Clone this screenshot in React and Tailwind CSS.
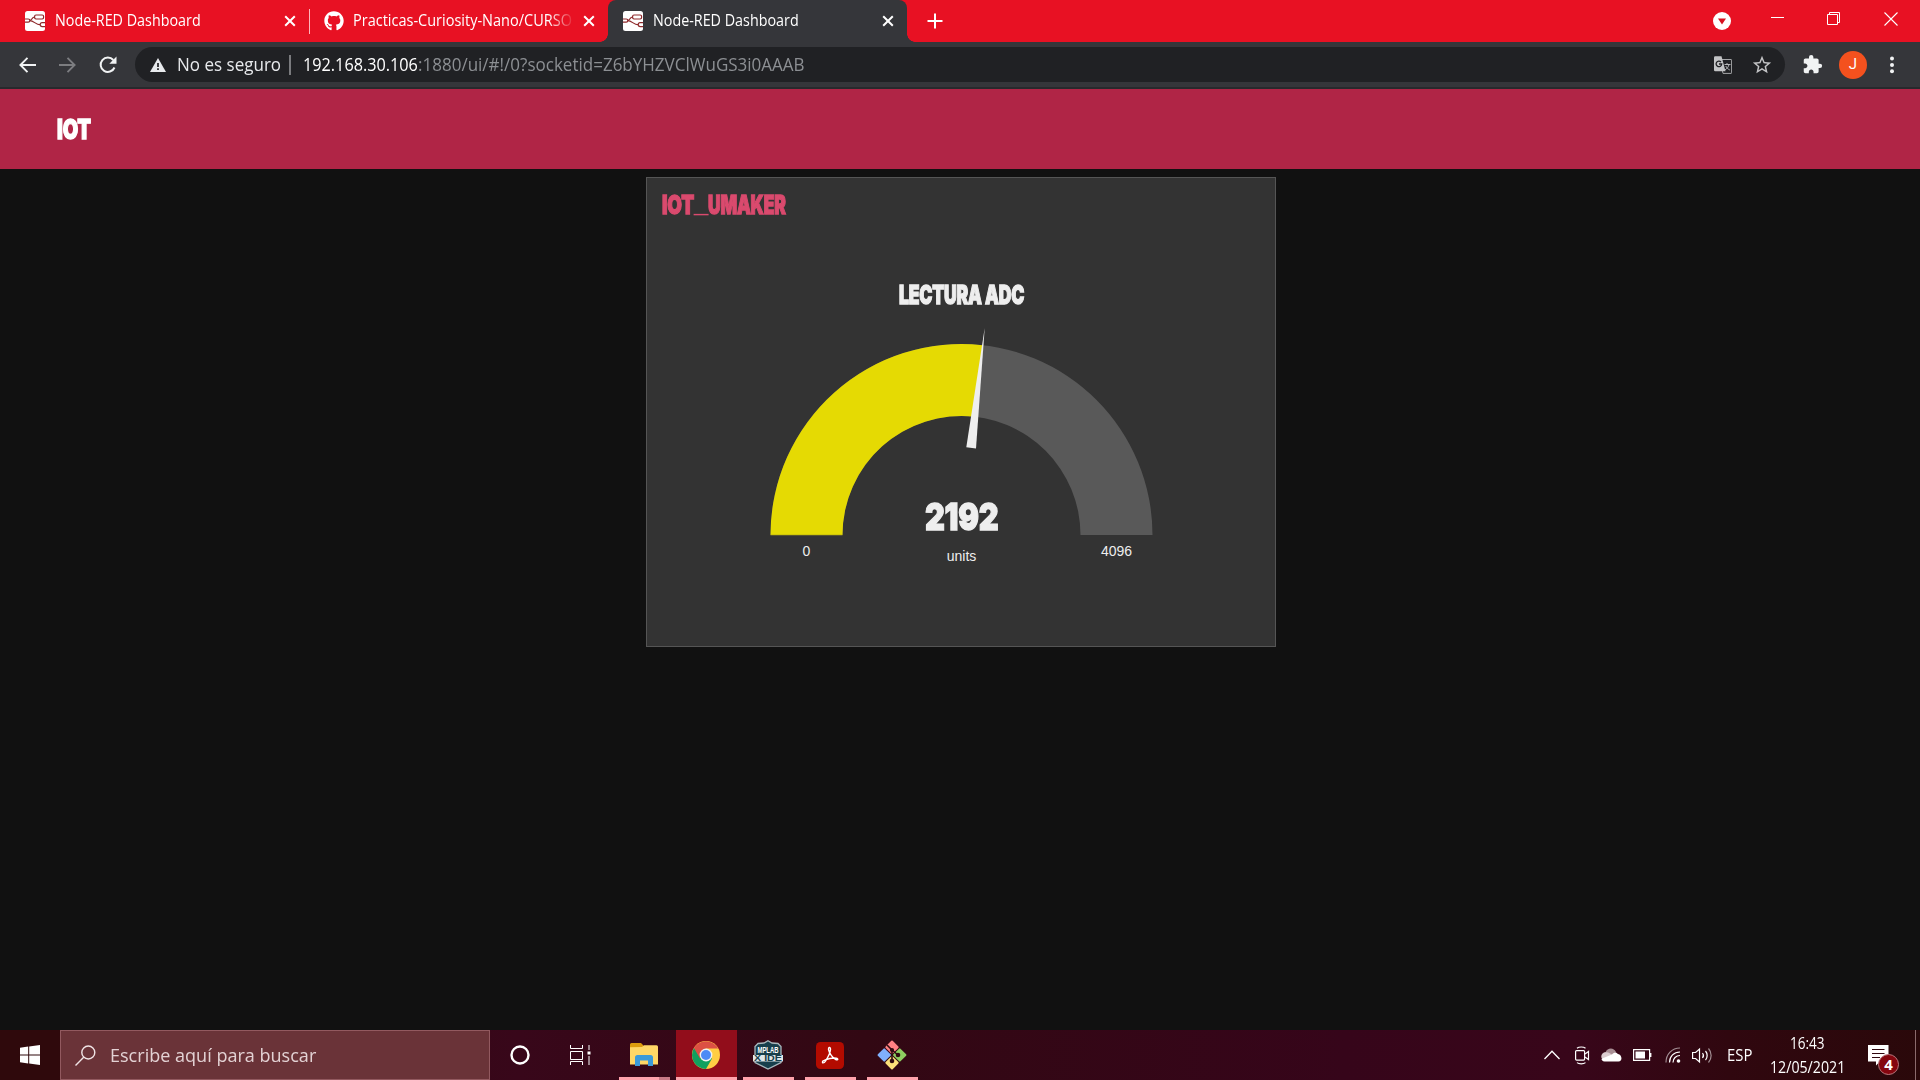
import React, { useLayoutEffect, useRef, useState } from 'react';
import { FaGithub } from 'react-icons/fa';
import { MdStarBorder, MdExtension } from 'react-icons/md';

// Single line of text stretched horizontally to an exact width.
function Fit({ w, className = '', children }) {
  const ref = useRef(null);
  const [s, setS] = useState(1);
  useLayoutEffect(() => {
    setS(w / ref.current.offsetWidth);
  }, [w]);
  return (
    <span className="block shrink-0 whitespace-nowrap" style={{ width: w }}>
      <span ref={ref} className={'inline-block origin-left ' + className} style={{ transform: `scaleX(${s})` }}>{children}</span>
    </span>
  );
}

const ui = "font-['Open_Sans','Noto_Sans',sans-serif]";
const impact = "font-['Inter',sans-serif] font-black tracking-[-0.01em] [-webkit-text-stroke:1.3px_currentColor]";

function NodeRedIcon() {
  return (
    <svg width="20" height="20" viewBox="0 0 20 20" className="shrink-0">
      <rect width="20" height="20" rx="2.5" fill="#fff" />
      <g fill="none" stroke="#8f2a2c" strokeWidth="1.2">
        <rect x="9.6" y="4" width="9" height="4" rx="1.4" />
        <path d="M0 8h3.200a1.500 1.500 0 0 1 0 3.200H0M4.500 9.600C7.500 9.600 6.500 6 9.600 6M4.500 9.600c5 0 5.500 4.200 11 4.200M20 11.600h-2.800a2 2 0 0 0 0 4H20" />
      </g>
    </svg>
  );
}

function TabClose() {
  return (
    <svg width="12" height="12" viewBox="0 0 12 12" className="shrink-0" stroke="#fff" strokeWidth="2"><path d="M1.200 1.200l9.600 9.600M10.800 1.200l-9.600 9.600" /></svg>
  );
}

function TabStrip() {
  return (
    <div className="flex h-[42px] bg-[#e81123] text-white">
      <div className="flex h-full w-[310px] items-center pl-[25px]">
        <NodeRedIcon />
        <div className="ml-[10px]"><Fit w={146} className={ui + ' pb-[2px] text-[15.5px] leading-[40px]'}>Node-RED Dashboard</Fit></div>
        <div className="ml-[83px]"><TabClose /></div>
        <div className="ml-auto h-[25px] w-px bg-[#ffb4ba]" />
      </div>
      <div className="flex h-full w-[298px] items-center pl-[14px]">
        <FaGithub size={20} className="shrink-0" />
        <div className="ml-[9px] w-[219px] overflow-hidden [mask-image:linear-gradient(to_right,black_195px,transparent_222px)]">
          <Fit w={219} className={ui + ' pb-[2px] text-[15.5px] leading-[40px]'}>Practicas-Curiosity-Nano/CURSO</Fit>
        </div>
        <div className="ml-[11px]"><TabClose /></div>
      </div>
      <div className="relative flex h-full w-[299px] items-center rounded-t-[8px] bg-[#35363a] pl-[15px]">
        <span className="absolute bottom-0 -left-[8px] size-[8px] bg-[radial-gradient(circle_at_0_0,transparent_7.5px,#35363a_8px)]" />
        <span className="absolute bottom-0 -right-[8px] size-[8px] bg-[radial-gradient(circle_at_100%_0,transparent_7.5px,#35363a_8px)]" />
        <NodeRedIcon />
        <div className="ml-[10px]"><Fit w={146} className={ui + ' pb-[2px] text-[15.5px] leading-[40px]'}>Node-RED Dashboard</Fit></div>
        <div className="ml-[83px]"><TabClose /></div>
      </div>
      <div className="ml-[20px] flex items-center">
        <svg width="16" height="16" viewBox="0 0 16 16" stroke="#fff" strokeWidth="2"><path d="M8 .5v15M.5 8h15" /></svg>
      </div>
      <div className="ml-auto flex items-start">
        <svg width="18" height="18" viewBox="0 0 18 18" className="mt-[12px]"><circle cx="9" cy="9" r="9" fill="#fff" /><path d="M5 6.500h8L9 12.500z" fill="#d8101f" /></svg>
        <svg width="13" height="1" className="mt-[17px] ml-[40px]"><rect width="13" height="1" fill="#fff" /></svg>
        <svg width="13" height="13" viewBox="0 0 13 13" className="mt-[12px] ml-[43px]" fill="none" stroke="#fff"><path d="M.5 2.500h10v10H.5zM2.500 2.500v-2h10v10h-2" /></svg>
        <svg width="14" height="14" viewBox="0 0 14 14" className="mt-[12px] mr-[22px] ml-[44px]" stroke="#fff" strokeWidth="1.100"><path d="M.5.5l13 13M13.500.5l-13 13" /></svg>
      </div>
    </div>
  );
}

function Toolbar() {
  return (
    <div className="flex h-[47px] items-start border-b-2 border-[#28292c] bg-[#35363a] pt-[5px]">
      <div className="flex h-[35px] items-center text-[#f1f3f4]">
        <svg width="17" height="16" viewBox="0 0 17 16" className="ml-[19px]" fill="none" stroke="#f1f3f4" strokeWidth="1.900"><path d="M17 8H1.500M8.500.800L1.400 8l7.100 7.200" /></svg>
        <svg width="17" height="16" viewBox="0 0 17 16" className="ml-[23px]" fill="none" stroke="#7c7d80" strokeWidth="1.900"><path d="M0 8h15.500M8.500.800L15.600 8l-7.100 7.200" /></svg>
        <svg width="18" height="18" viewBox="0 0 18 18" className="ml-[23px]" fill="none" stroke="#f1f3f4" strokeWidth="2"><path d="M15.500 11.500A7.200 7.200 0 1 1 14.300 4" /><path d="M17.500.600v7.200h-7.200z" fill="#f1f3f4" stroke="none" /></svg>
      </div>
      <div className="ml-[18px] flex h-[35px] w-[1650px] items-center rounded-full bg-[#202124] pl-[15px]">
        <svg width="16" height="14" viewBox="0 0 16 14" className="shrink-0"><path d="M8 0l8 14H0z" fill="#e8eaed" /><path d="M8 5v4M8 10.300v1.700" stroke="#202124" strokeWidth="1.700" /></svg>
        <div className="ml-[11px]"><Fit w={104} className={ui + ' text-[18px] leading-[35px] text-[#e8eaed]'}>No es seguro</Fit></div>
        <div className="ml-[8px] h-[20px] w-[2px] bg-[#7a7b7e]" />
        <div className="ml-[12px]"><Fit w={115} className={ui + ' text-[17.5px] leading-[35px] text-[#fff]'}>192.168.30.106</Fit></div>
        <Fit w={387} className={ui + ' text-[17.5px] leading-[35px] text-[#8c8f93]'}>:1880/ui/#!/0?socketid=Z6bYHZVClWuGS3i0AAAB</Fit>
        <svg width="18" height="18" viewBox="0 0 18 18" className="ml-auto">
          <path d="M6 3.500h11a.6.6 0 0 1 .6.600v12.700a.6.6 0 0 1-.6.600H9z" fill="none" stroke="#a5a6a8" strokeWidth="1" />
          <path d="M1.200.200h6.300l4 15H1.200a1.200 1.200 0 0 1-1.200-1.200V1.400A1.200 1.200 0 0 1 1.200.200z" fill="#c3c4c6" />
          <path d="M7 6A2.800 2.800 0 1 0 7.700 8H5" fill="none" stroke="#202124" strokeWidth="1.300" />
          <path d="M10.500 8.500h6M13 7v1.500M15 8.500c-.5 2.500-2 4-4 5.500M11.800 10c.8 1.800 2 3 4 4" fill="none" stroke="#b5b6b8" />
        </svg>
        <MdStarBorder size={22} className="mr-[12px] ml-[19px] text-[#c3c4c6]" />
      </div>
      <div className="flex h-[35px] items-center">
        <MdExtension size={21} className="ml-[17px] text-[#f1f3f4]" />
        <div className="ml-[16px] flex size-[28px] items-center justify-center rounded-full bg-[#f4511e] font-['Roboto',sans-serif] text-[15px] text-white">J</div>
        <svg width="4" height="18" viewBox="0 0 4 18" className="ml-[23px]" fill="#f1f3f4"><circle cx="2" cy="2.500" r="2" /><circle cx="2" cy="9" r="2" /><circle cx="2" cy="15.300" r="2" /></svg>
      </div>
    </div>
  );
}

function Gauge() {
  return (
    <svg width="385" height="210" viewBox="769 327 385 210" className="block">
      <path d="M770.500 535A191 191 0 0 1 1152.500 535H1080.500A119 119 0 0 0 842.500 535Z" fill="#595959" />
      <path d="M770.500 535A191 191 0 0 1 982.600 345.200L974.600 416.700A119 119 0 0 0 842.500 535Z" fill="#e5da03" />
      <path d="M770.500 535.300h72" stroke="#6e6a28" strokeWidth="0.8" />
      <path d="M984.700 328L966.300 447.300 976 448.500Z" fill="#eee" />
    </svg>
  );
}

function Dashboard() {
  return (
    <main className="flex flex-1 flex-col bg-[#111]">
      <header className="h-[80px] bg-[#b02546] pt-[24px] pl-[57px] text-white">
        <Fit w={34} className={impact + ' text-[26.5px] leading-[33px]'}>IOT</Fit>
      </header>
      <section className="mt-[8px] ml-[646px] flex h-[470px] w-[630px] flex-col border border-[#555] bg-[#333]">
        <div className="mt-[10px] ml-[15px] flex text-[#da4a6e]">
          <Fit w={32} className={impact + ' text-[25.5px] leading-[34px]'}>IOT</Fit>
          <Fit w={14} className="font-['Liberation_Sans',sans-serif] text-[22px] leading-[31px]">_</Fit>
          <Fit w={78} className={impact + ' text-[25.5px] leading-[34px]'}>UMAKER</Fit>
        </div>
        <div className="mt-[57px] ml-[252px] text-[#eee]"><Fit w={125} className={impact + ' text-[25.5px] leading-[32px]'}>LECTURA ADC</Fit></div>
        <div className="mt-[16px] ml-[122px] w-[385px]">
          <Gauge />
          <div className="relative -mt-[40px] flex justify-center text-[#eee]"><Fit w={73} className={impact + ' text-[37.5px] leading-[40px]'}>2192</Fit></div>
          <div className="grid grid-cols-[75px_1fr_75px] pt-px text-center font-['Liberation_Sans',sans-serif] text-[14px] leading-[16px] text-[#eee]">
            <span className="pt-[5px]">0</span><span className="pt-[10px]">units</span><span className="pt-[5px]">4096</span>
          </div>
        </div>
      </section>
    </main>
  );
}

function FolderIcon() {
  return (
    <svg width="28" height="24" viewBox="0 0 28 24"><path d="M0 2.500V1.500A1.500 1.500 0 0 1 1.500 0H11l2.500 2.500V6H0z" fill="#dd9c0d" /><path d="M0 4.200l12-.2 2-1.700h12.500A1.500 1.500 0 0 1 28 3.800V21.500H0z" fill="#ffd766" /><path d="M5 23V14.500A2.500 2.500 0 0 1 7.500 12h13a2.500 2.500 0 0 1 2.500 2.500V23h-5v-5.500H10V23z" fill="#3b9ad9" /></svg>
  );
}

function ChromeIcon() {
  return (
    <svg width="28" height="28" viewBox="0 0 28 28"><circle cx="14" cy="14" r="14" fill="#ffce44" /><path d="M14 14L1.900 7A14 14 0 0 0 14 28l6-10.500z" fill="#11a05e" /><path d="M1.900 7A14 14 0 0 1 26.100 7.500H14L8 17.500z" fill="#dc5044" /><circle cx="14" cy="14" r="6.400" fill="#f1f1f1" /><circle cx="14" cy="14" r="5" fill="#4c8bf5" /></svg>
  );
}

function MplabIcon() {
  return (
    <svg width="32" height="30" viewBox="0 0 32 30" className="overflow-visible">
      <path d="M16 .8L20 3l6 .5 3 3V22.500L16 29 3 22.500V6.500L6 3.500 12 3z" fill="#173f4c" stroke="#a9b8bd" strokeWidth="1.3" />
      <path d="M1 15h30v6.500H1z" fill="#dfe6e8" />
      <text x="16" y="13" textAnchor="middle" textLength="21" lengthAdjust="spacingAndGlyphs" fontFamily="Liberation Sans, sans-serif" fontWeight="700" fontSize="8.5" fill="#fff">MPLAB</text>
      <text x="16" y="21.200" textAnchor="middle" textLength="28" lengthAdjust="spacingAndGlyphs" fontFamily="Liberation Sans, sans-serif" fontWeight="700" fontSize="8.5" fill="#173f4c">X IDE</text>
    </svg>
  );
}

function AcrobatIcon() {
  return (
    <svg width="28" height="27" viewBox="0 0 28 27"><rect width="28" height="27" rx="4.5" fill="#b30b00" /><path d="M6.800 19.200c-1.200 2.200 1.200 2.400 2.800-.2 2-3.200 4.700-8.500 4.900-11.500.1-3-2.500-2.500-1.900.3.700 3.500 4 8 7.200 9.800 2.200 1 2.800-.8.500-1.400-3.200-.8-9.500.5-13.500 3z" fill="none" stroke="#fff" strokeWidth="1.4" /></svg>
  );
}

function GitIcon() {
  return (
    <svg width="30" height="30" viewBox="0 0 30 30">
      <g transform="rotate(45 15 15)"><rect x="4.500" y="4.500" width="10" height="10" rx="1" fill="#ff8083" /><rect x="15.500" y="4.500" width="10" height="10" rx="1" fill="#8ecf60" /><rect x="4.500" y="15.500" width="10" height="10" rx="1" fill="#80b0fb" /><rect x="15.500" y="15.500" width="10" height="10" rx="1" fill="#fde17a" /></g>
      <path d="M10 5l5 5V22M15 10l6 5" fill="none" stroke="#2f0a10" strokeWidth="1.6" /><circle cx="15" cy="10" r="2.100" fill="#2f0a10" /><circle cx="15" cy="21" r="2.300" fill="#2f0a10" /><circle cx="21" cy="15" r="2.300" fill="#2f0a10" />
    </svg>
  );
}

function AppButton({ className, bar = 'w-[51px]', children }) {
  return (
    <div className={'flex h-full flex-col items-center ' + className}>
      <div className="flex h-[47px] items-center pt-[3px]">{children}</div>
      <div className={'h-[3px] bg-[#ffa3ac] ' + bar} />
    </div>
  );
}

function Taskbar() {
  return (
    <footer className="flex h-[50px] bg-[linear-gradient(to_right,#2f090c_0%,#2f090c_3%,#38071a_27%,#320813_45%,#36051a_70%,#38061a_82%,#30070f_90%,#2a080a_100%)] text-white">
      <div className="flex w-[60px] items-center justify-center">
        <svg width="20" height="20" viewBox="0 0 20 20" fill="#fff"><path d="M0 2.800L8.200 1.600V9.500H0zM9.200 1.500L20 0v9.500H9.200zM0 10.500h8.200v7.900L0 17.200zM9.200 10.500H20V20L9.200 18.500z" /></svg>
      </div>
      <div className="flex w-[430px] items-center border border-[#92595f] bg-[#6a3338] pl-[14px]">
        <svg width="21" height="21" viewBox="0 0 21 21" fill="none" stroke="#f0e4e5" strokeWidth="1.4"><circle cx="13.300" cy="7.500" r="6.500" /><path d="M8.700 12.200L.5 20.400" /></svg>
        <div className="ml-[14px]"><Fit w={206} className={ui + ' text-[19px] leading-[48px] text-[#e3d2d4]'}>Escribe aquí para buscar</Fit></div>
      </div>
      <div className="flex w-[60px] items-center justify-center"><svg width="20" height="20" viewBox="0 0 20 20"><circle cx="10" cy="10" r="8.500" fill="none" stroke="#fff" strokeWidth="2.4" /></svg></div>
      <div className="flex w-[60px] items-center justify-center"><svg width="21" height="20" viewBox="0 0 21 20" fill="none" stroke="#fff" strokeWidth="1"><path d="M.5 0v3.500h12V0M.5 6.500h12v8H.5zM.5 20v-3.500h12V20M19 0v5M19 11v9" /><rect x="17.500" y="6.500" width="3" height="3" fill="#fff" stroke="none" /></svg></div>
      <div className="flex h-full w-[66px] flex-col items-center pl-[2px]">
        <div className="flex h-[47px] items-center pt-[2px]"><FolderIcon /></div>
        <div className="flex h-[3px] w-[51px]"><span className="w-[40px] bg-[#ffa3ac]" /><span className="w-[11px] bg-[#c87a86]" /></div>
      </div>
      <AppButton className="w-[61px] bg-[#920d1b]" bar="w-full"><div className="pr-[2px]"><ChromeIcon /></div></AppButton>
      <AppButton className="w-[62px]"><MplabIcon /></AppButton>
      <AppButton className="w-[62px]"><AcrobatIcon /></AppButton>
      <AppButton className="w-[62px]"><GitIcon /></AppButton>
      <div className="ml-auto flex items-center">
        <svg width="16" height="10" viewBox="0 0 16 10" fill="none" stroke="#fff" strokeWidth="1.3"><path d="M.5 9L8 1.300 15.500 9" /></svg>
        <svg width="15" height="19" viewBox="0 0 15 19" className="ml-[15px]" fill="none" stroke="#fff" strokeWidth="1.2"><rect x=".6" y="4.600" width="9" height="9.500" rx="1" /><path d="M10 8l3.500-2.500v8L10 11M2 2.200C4 .6 8.500.6 10.500 2.200M2 16.600c2 1.600 6.500 1.600 8.500 0" /></svg>
        <svg width="21" height="14" viewBox="0 0 21 14" className="ml-[11px]"><path d="M.5 10C-.5 6.500 2 4.300 4.500 4.200 6.500-.8 13-.8 15 4l2 4-8 3z" fill="#a98f95" /><path d="M4.500 4.200c3-.4 5 1.300 7.500 3L4 12C-.5 12-.8 5 4.500 4.200z" fill="#dccdd0" /><path d="M3.500 13.500c-2 0-3-1.500-3-2.700L11 6.500c1.500-2 4-2.300 6-.6 4 .3 5 7.600.5 7.600z" fill="#fff" /></svg>
        <svg width="19" height="12" viewBox="0 0 19 12" className="ml-[11px]"><path d="M.6.600h16v10.800H.6zM17.800 4v4" fill="none" stroke="#fff" strokeWidth="1.2" /><rect x="2.500" y="2.500" width="9.500" height="7" fill="#fff" /></svg>
        <svg width="16" height="16" viewBox="0 0 16 16" className="ml-[13px]" fill="none" stroke="#fff" strokeWidth="1.2"><path d="M1 15.500C1 7 7 1 15 1" opacity=".55" /><path d="M4.500 15.500C4.500 9 9 5 15 5M8 15.500C8 11.500 11 8.500 15 8.500" /><circle cx="13.500" cy="14" r="1.800" fill="#fff" stroke="none" /></svg>
        <svg width="21" height="17" viewBox="0 0 21 17" className="ml-[11px]" fill="none" stroke="#fff" strokeWidth="1.2"><path d="M.6 5.500h3L7.500 2v13l-3.900-3.500h-3zM10.500 6c1.200 1.500 1.200 3.500 0 5M13.500 4c2.200 2.500 2.200 6.500 0 9" /><path d="M16.500 1.500c3.500 4 3.500 10 0 14" opacity=".55" /></svg>
        <div className="ml-[14px]"><Fit w={25} className={ui + ' text-[15.5px]'}>ESP</Fit></div>
      </div>
      <div className="ml-[17px] flex w-[77px] flex-col items-center pt-[1px]">
        <Fit w={35} className={ui + ' text-[15.5px] leading-[23px]'}>16:43</Fit>
        <Fit w={75} className={ui + ' text-[15.5px] leading-[23px]'}>12/05/2021</Fit>
      </div>
      <div className="relative mr-[12px] ml-[22px] w-[35px] pt-[15px]">
        <svg width="21" height="21" viewBox="0 0 21 21"><path d="M0 0h20.500v16.500H12L8 20.500v-4H0z" fill="#fff" /><path d="M4 4.500h12.500M4 8.500h12.500M4 12.500h8" stroke="#30070f" strokeWidth="1.2" /></svg>
        <span className="absolute top-[24px] left-[10px] flex size-[21px] items-center justify-center rounded-full border border-[#b9787e] bg-[#85060f] font-['Open_Sans',sans-serif] text-[15px] leading-none font-bold">4</span>
      </div>
      <div className="mr-[4px] w-px bg-[#8b6a6c]" />
    </footer>
  );
}

export default function App() {
  return (
    <div className="flex h-[1080px] w-[1920px] flex-col overflow-hidden bg-[#111]">
      <TabStrip />
      <Toolbar />
      <Dashboard />
      <Taskbar />
    </div>
  );
}
